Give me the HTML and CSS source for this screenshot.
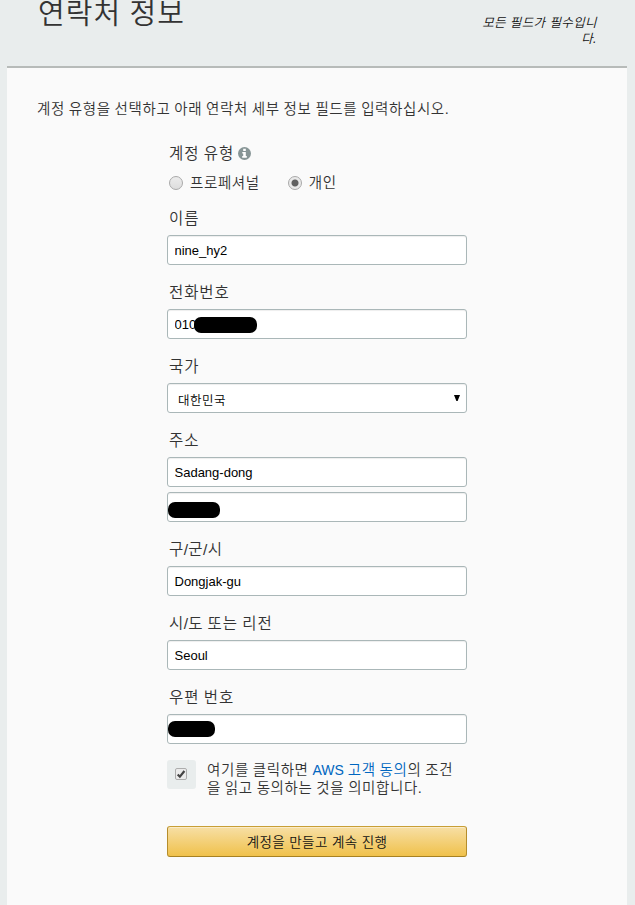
FILE: index.html
```html
<!DOCTYPE html>
<html lang="ko">

<head>
    <title>연락처 정보</title>
    <meta charset="utf-8">
    <meta name="viewport" content="width=device-width, initial-scale=1.0">
    <link rel="stylesheet" href="styles.css">
</head>

<body>
    <div class="signup">
        <div class="signup-header">
            <h1>연락처 정보</h1>
            <p class="required-note">모든 필드가 필수입니다.</p>
        </div>
        <div class="signup-body">
            <p class="intro">계정 유형을 선택하고 아래 연락처 세부 정보 필드를 입력하십시오.</p>
            <form class="contact-form">
                <div class="type-label">
                    <span class="label">계정 유형</span>
                    <svg class="info" width="13" height="13" viewBox="0 0 13 13">
                        <circle cx="6.5" cy="6.5" r="6.5" fill="#879596"/>
                        <path d="M5.2 1.8h2.6v2.1H5.2zM4.3 4.9h3.5v4.1h1v1.8H4.2V9h1V6.6h-.9z" fill="#fff"/>
                    </svg>
                </div>
                <div class="radios">
                    <label class="radio"><input type="radio" name="type"><span>프로페셔널</span></label>
                    <label class="radio"><input type="radio" name="type" checked><span>개인</span></label>
                </div>
                <div class="field">
                    <label class="label">이름</label>
                    <div class="control"><input class="text" type="text" value="nine_hy2"></div>
                </div>
                <div class="field">
                    <label class="label">전화번호</label>
                    <div class="control"><input class="text" type="text" value="010"><span class="mask mask-phone"></span></div>
                </div>
                <div class="field">
                    <label class="label">국가</label>
                    <div class="control select"><span>대한민국</span>
                        <svg width="6" height="6" viewBox="0 0 6 6"><path d="M0 0h6L3.6 6H2.4z" fill="#000"/></svg>
                    </div>
                </div>
                <div class="field">
                    <label class="label">주소</label>
                    <div class="control"><input class="text" type="text" value="Sadang-dong"></div>
                    <div class="control"><input class="text" type="text"><span class="mask mask-address"></span></div>
                </div>
                <div class="field">
                    <label class="label"><span class="slashed">구/군/시</span></label>
                    <div class="control"><input class="text" type="text" value="Dongjak-gu"></div>
                </div>
                <div class="field">
                    <label class="label"><span class="slashed">시/도</span> 또는 리전</label>
                    <div class="control"><input class="text" type="text" value="Seoul"></div>
                </div>
                <div class="field">
                    <label class="label">우편 번호</label>
                    <div class="control"><input class="text" type="text"><span class="mask mask-zip"></span></div>
                </div>
                <div class="agreement">
                    <span class="check-box">
                        <svg width="12" height="12" viewBox="0 0 12 12">
                            <rect x=".5" y=".5" width="11" height="11" rx="1.5" fill="#ebebeb" stroke="#adadad"/>
                            <path d="M2.7 6.4l2.2 2.3L9.4 3" fill="none" stroke="#444" stroke-width="2.2"/>
                        </svg>
                    </span>
                    <p>여기를 클릭하면 <a href="#"><span class="latin">AWS</span> 고객 동의</a>의 조건<br>을 읽고 동의하는 것을 의미합니다.</p>
                </div>
                <button class="submit" type="button">계정을 만들고 계속 진행</button>
            </form>
        </div>
    </div>
</body>

</html>
```

FILE: styles.css
```css
body {
    margin: 0;
    height: 905px;
    overflow: hidden;
    background-color: #e9eded;
    color: #333;
    font-family: "Liberation Sans", "Noto Sans CJK KR", sans-serif;
    font-size: 14.5px;
    font-weight: 350;
    letter-spacing: 0.6px;
    word-spacing: -0.7px;
}

.signup {
    margin: 0 8px 0 7px;
}

.signup-header {
    display: flex;
    justify-content: space-between;
    height: 66px;
    padding: 0 30px;
    border-bottom: 2px solid #b7bbb9;
}

.signup-header h1 {
    margin: -6px 0 0 1px;
    font-size: 29px;
    font-weight: 350;
    line-height: 40px;
    letter-spacing: 1.1px;
    word-spacing: -1px;
}

.required-note {
    width: 122px;
    margin: 15px 0 0;
    font-size: 12.5px;
    font-style: italic;
    line-height: 16px;
    letter-spacing: 0.4px;
    word-spacing: 0;
    text-align: right;
    word-break: break-all;
    color: #111;
}

.signup-body {
    height: 837px;
    box-sizing: border-box;
    padding: 31px 30px 0;
    background-color: #fafafa;
}

.intro {
    margin: 0;
    line-height: 20px;
}

.contact-form {
    width: 300px;
    margin: 25px 0 0 130px;
}

.label {
    display: block;
    padding-left: 2px;
    font-size: 15.5px;
    line-height: 20px;
    letter-spacing: 0.9px;
}

.slashed {
    letter-spacing: 0.4px;
}

.type-label {
    display: flex;
    align-items: center;
    gap: 4px;
}

.type-label svg {
    margin-top: -2px;
}

.radios {
    display: flex;
    gap: 28px;
    height: 20px;
    margin: 9px 0 16px 2px;
}

.radio {
    display: flex;
    align-items: center;
    gap: 7px;
    line-height: 20px;
}

.radio input {
    appearance: none;
    width: 14px;
    height: 14px;
    margin: -1px 0 0;
    border: 1px solid #a9a9a9;
    border-radius: 50%;
    background: linear-gradient(#ececec, #ddd);
}

.radio input:checked {
    background: radial-gradient(circle, #606060 3px, #e9e9e9 4px);
}

.field {
    margin-bottom: 18px;
}

.field .label {
    margin-bottom: 6px;
}

.control {
    position: relative;
    box-sizing: border-box;
    height: 30px;
}

.control + .control {
    margin-top: 5px;
}

.text,
.select {
    display: block;
    box-sizing: border-box;
    width: 100%;
    height: 30px;
    padding: 0 6.5px;
    border: 1px solid #aab7b8;
    border-radius: 3px;
    background-color: #fff;
    box-shadow: inset 0 1px 1px #eee;
    font-family: "Liberation Sans", "Noto Sans CJK KR", sans-serif;
    font-size: 13px;
    color: #000;
}

.select {
    display: flex;
    align-items: center;
    justify-content: space-between;
    padding: 3px 6px 0 10px;
    font-size: 12.5px;
    letter-spacing: 0.5px;
}

.select svg {
    margin-top: -4px;
}

.mask {
    position: absolute;
    height: 16px;
    border-radius: 7px;
    background-color: #000;
}

.mask-phone {
    left: 27px;
    top: 8px;
    width: 63px;
}

.mask-address {
    left: 1px;
    top: 10px;
    width: 52px;
}

.mask-zip {
    left: 1px;
    top: 7px;
    width: 47px;
}

.agreement {
    display: flex;
    gap: 11px;
    margin-top: -2px;
}

.check-box {
    display: flex;
    align-items: center;
    justify-content: center;
    width: 29px;
    height: 29px;
    padding: 0 1px 1px 0;
    box-sizing: border-box;
    border-radius: 3px;
    background-color: #e9eded;
}

.agreement p {
    margin: 1px 0 0;
    line-height: 18px;
    white-space: nowrap;
}

.agreement a {
    color: #0066c0;
    text-decoration: none;
}

.agreement .latin {
    font-size: 14px;
    letter-spacing: 0;
}

.submit {
    display: block;
    width: 300px;
    height: 31px;
    margin-top: 29px;
    padding: 0 0 2px;
    border: 1px solid;
    border-color: #c89f36 #b58d2b #a78122;
    border-radius: 3px;
    background: linear-gradient(#f7dfa5, #f0c14b);
    box-shadow: inset 0 1px 0 #fbecc8;
    font-family: "Liberation Sans", "Noto Sans CJK KR", sans-serif;
    font-size: 13.5px;
    font-weight: 350;
    letter-spacing: 0.4px;
    color: #111;
}
```
